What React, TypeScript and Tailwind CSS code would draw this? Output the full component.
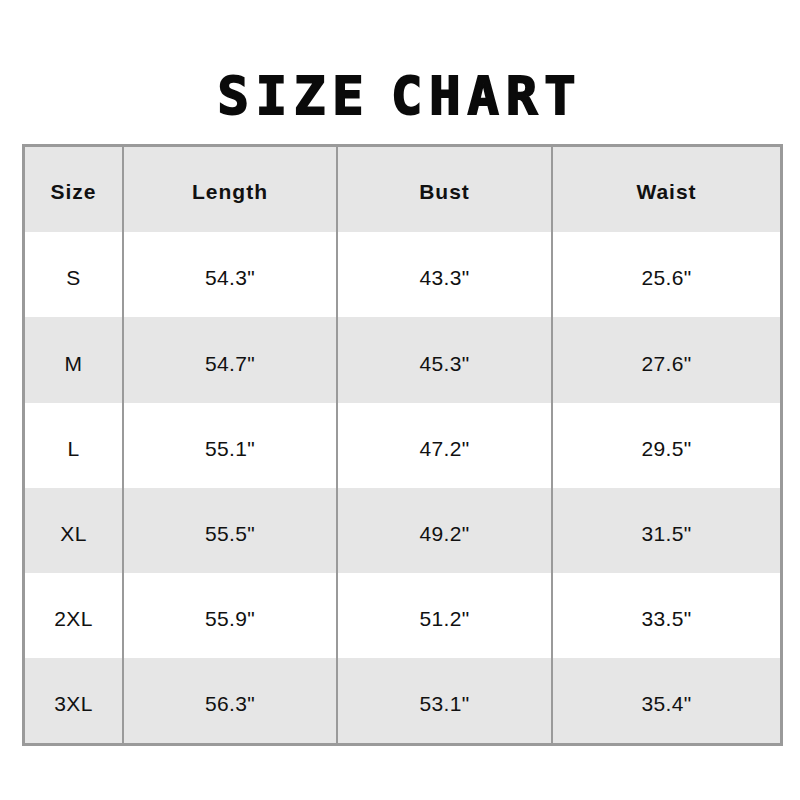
// App.tsx: 사이즈 차트 표
import React from 'react';

const headers = ['Size', 'Length', 'Bust', 'Waist'];

const rows: string[][] = [
  ['S', '54.3"', '43.3"', '25.6"'],
  ['M', '54.7"', '45.3"', '27.6"'],
  ['L', '55.1"', '47.2"', '29.5"'],
  ['XL', '55.5"', '49.2"', '31.5"'],
  ['2XL', '55.9"', '51.2"', '33.5"'],
  ['3XL', '56.3"', '53.1"', '35.4"'],
];

// 열 너비 (왼쪽 구분선 포함)
const cols = 'grid grid-cols-[97px_214px_215px_229px]';

function Cell({ text, first, bold }: { text: string; first: boolean; bold?: boolean }) {
  return (
    <div
      className={
        'flex items-center justify-center text-[#111] ' +
        (first ? '' : 'border-l-2 border-[#9a9a9a] ') +
        (bold ? 'pt-[4px] font-bold text-[21px] tracking-[1px]' : 'pt-[7px] text-[21px] tracking-[0.3px]')
      }
    >
      {text}
    </div>
  );
}

export default function App() {
  return (
    <div className="w-[800px] h-[800px] bg-white flex flex-col items-center font-['Liberation_Sans',Arial,sans-serif]">
      <h1 className="mt-[70px] h-[52px] text-[52px] leading-[52px] font-bold tracking-[7px] [word-spacing:-18px] text-[#0a0a0a] font-['DejaVu_Sans_Mono',monospace] [-webkit-text-stroke:2px_#0a0a0a]">
        SIZE CHART
      </h1>
      <div className="mt-[22px] ml-[5px] w-[761px] border-[3px] border-[#9a9a9a] flex flex-col">
        <div className={cols + ' h-[85px] bg-[#e6e6e6]'}>
          {headers.map((h, i) => (
            <Cell key={h} text={h} first={i === 0} bold />
          ))}
        </div>
        {rows.map((r, ri) => (
          <div
            key={r[0]}
            className={cols + (ri === 1 ? ' h-[86px]' : ' h-[85px]') + (ri % 2 === 1 ? ' bg-[#e6e6e6]' : ' bg-white')}
          >
            {r.map((v, i) => (
              <Cell key={i} text={v} first={i === 0} />
            ))}
          </div>
        ))}
      </div>
    </div>
  );
}
